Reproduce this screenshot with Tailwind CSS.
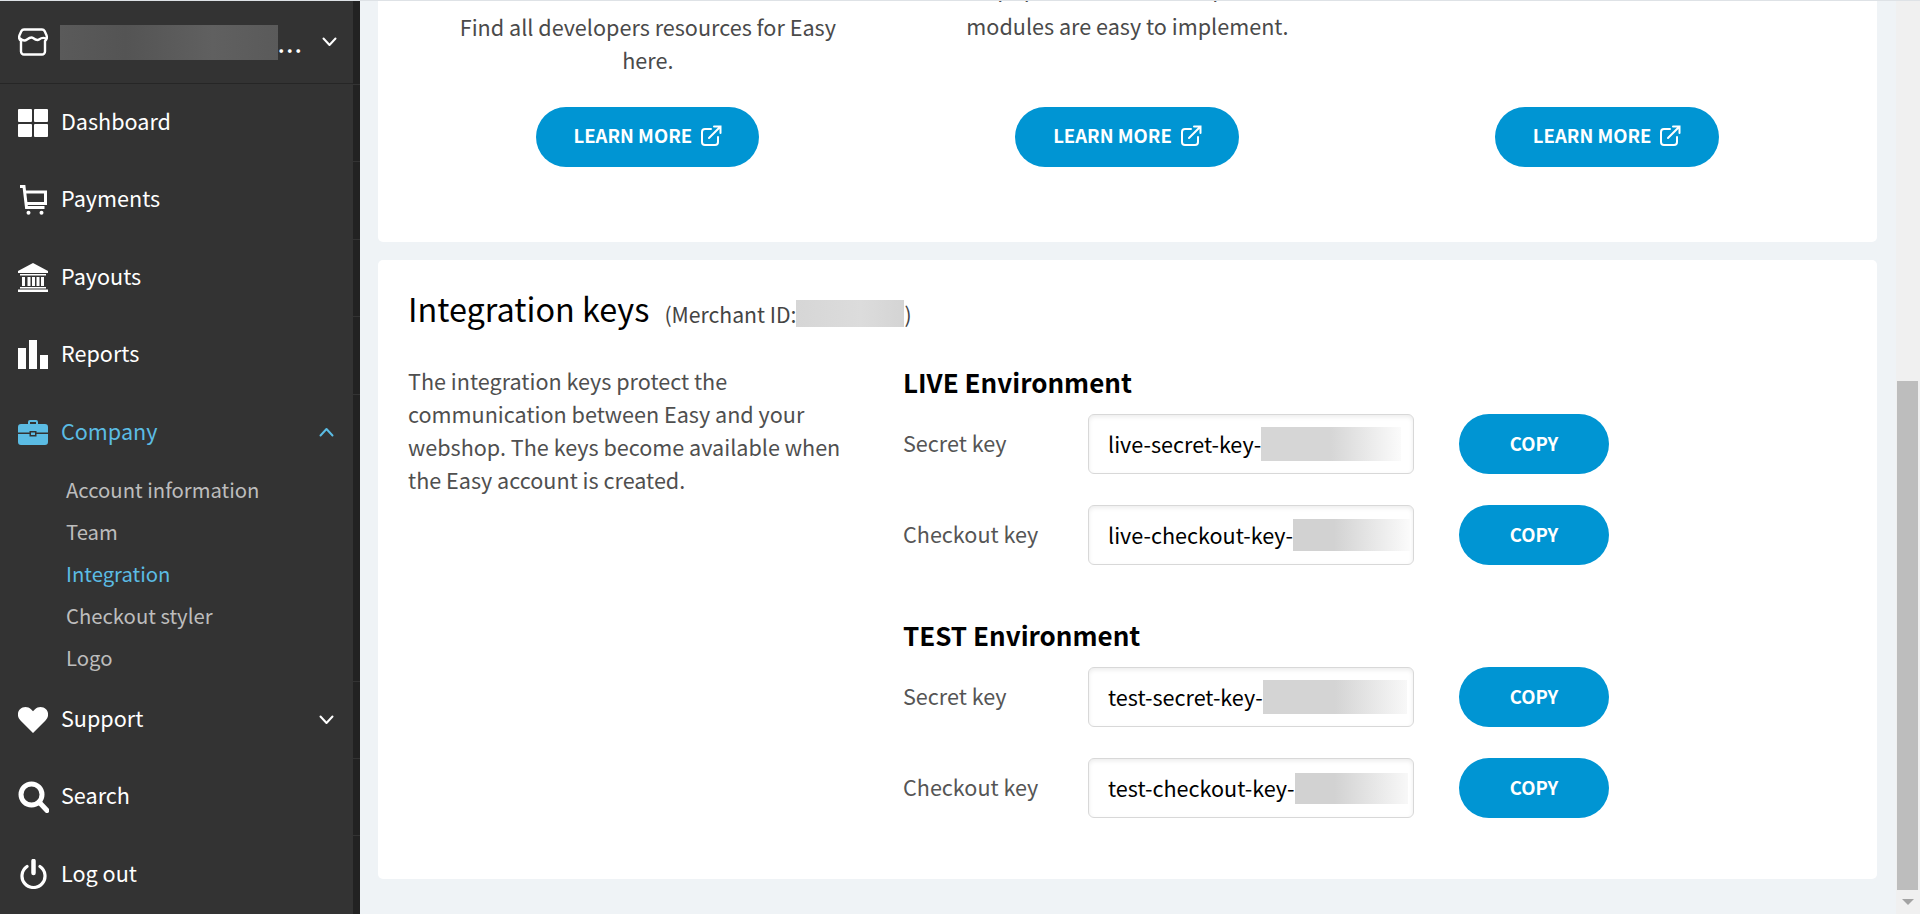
<!DOCTYPE html>
<html lang="en">
<head>
<meta charset="utf-8">
<script src="https://cdn.jsdelivr.net/npm/@tailwindcss/browser@4"></script>
<title>Integration</title>
</head>
<body class="m-0 h-[914px] w-[1920px] overflow-hidden bg-[#eff3f6] font-['Noto_Sans_CJK_SC','Noto_Sans',sans-serif] text-[21.6px]">
<div class="h-px bg-[#dee2e6]"></div>
<div class="flex h-[913px]">
  <!-- sidebar -->
  <aside class="flex w-[353px] flex-col bg-[#333333] text-white">
    <div class="flex h-[83px] items-center border-b border-[#262626] pl-[18px] pr-[16px]">
      <svg class="h-[28px] w-[30px] shrink-0" viewBox="0 0 30 28" fill="none" stroke="white" stroke-width="2.4" stroke-linejoin="round"><path d="M6 1.500h18a3 3 0 0 1 2.600 1.600l2 4.500c.8 2.200 0 4-1.600 5.400v10.500a3 3 0 0 1-3 3H6a3 3 0 0 1-3-3V13C1.400 11.600.6 9.800 1.400 7.600l2-4.500A3 3 0 0 1 6 1.500z"/><path d="M2 10.500c3 2.500 5 2.500 7 1s4-3 6-1.500 4 3 6 1.500 4-2.500 7-1" stroke-linecap="round"/></svg>
      <div class="ml-[12px] h-[35px] w-[218px] bg-[linear-gradient(90deg,#5a5a5a,#545454_30%,#606060_70%,#5a5a5a)]"></div>
      <span class="mt-[6px] w-[22px] text-[20px] font-bold leading-none tracking-[2px]">...</span>
      <svg class="ml-auto h-[10px] w-[15px]" viewBox="0 0 15 10" fill="none" stroke="white" stroke-width="2" stroke-linecap="round" stroke-linejoin="round"><path d="M1.500 1.500 7.500 8l6-6.500"/></svg>
    </div>
    <nav class="flex flex-col">
      <a class="flex h-[77.4px] items-center pl-[18px]">
        <svg class="h-[28px] w-[30px] shrink-0" viewBox="0 0 30 28" fill="white"><rect width="14" height="13" rx="1"/><rect x="16" width="14" height="13" rx="1"/><rect y="15" width="14" height="13" rx="1"/><rect x="16" y="15" width="14" height="13" rx="1"/></svg>
        <span class="-mt-[3px] ml-[13px]">Dashboard</span>
      </a>
      <a class="flex h-[77.4px] items-center pl-[18px]">
        <svg class="h-[30px] w-[30px] shrink-0" viewBox="0 0 30 30" fill="none" stroke="white" stroke-width="3"><path d="M2 1.500h4l2.500 21h18"/><path d="M7 7h20.500v11.500H8.500"/><circle cx="10.500" cy="27.800" r="2" fill="white" stroke="none"/><circle cx="23.500" cy="27.800" r="2" fill="white" stroke="none"/></svg>
        <span class="-mt-[3px] ml-[13px]">Payments</span>
      </a>
      <a class="flex h-[77.4px] items-center pl-[18px]">
        <svg class="h-[29px] w-[30px] shrink-0" viewBox="0 0 30 29" fill="white"><path d="M15 0 30 8v2H0V8z"/><path d="M2 11h26v1.500H2zM4 14h3v9H4zM9.500 14h3v9h-3zM14 14h3v9h-3zM18.500 14h3v9h-3zM23 14h3v9h-3zM2 24h26v1.500H2zM0 26.500h30V29H0z"/></svg>
        <span class="-mt-[3px] ml-[13px]">Payouts</span>
      </a>
      <a class="flex h-[77.4px] items-center pl-[18px]">
        <svg class="h-[29px] w-[30px] shrink-0" viewBox="0 0 30 29" fill="white"><rect y="8" width="8" height="21"/><rect x="11" width="8" height="29"/><rect x="22" y="15" width="8" height="14"/></svg>
        <span class="-mt-[3px] ml-[13px]">Reports</span>
      </a>
      <a class="flex h-[77.4px] items-center pl-[18px] pr-[19px] text-[#5bbce4]">
        <svg class="h-[25px] w-[30px] shrink-0" viewBox="0 0 30 25" fill="#5bbce4"><path d="M10 4V2a2 2 0 0 1 2-2h6a2 2 0 0 1 2 2v2h7a3 3 0 0 1 3 3v5.500H18.500V11h-7v1.500H0V7a3 3 0 0 1 3-3zm2 0h6V2h-6z"/><path d="M0 14h11.500v2.500h7V14H30v8a3 3 0 0 1-3 3H3a3 3 0 0 1-3-3z"/><rect x="13" y="12.500" width="4" height="2.500"/></svg>
        <span class="-mt-[3px] ml-[13px]">Company</span>
        <svg class="ml-auto h-[10px] w-[15px]" viewBox="0 0 15 10" fill="none" stroke="#5bbce4" stroke-width="2" stroke-linecap="round" stroke-linejoin="round"><path d="M1.500 8.500 7.500 2l6 6.500"/></svg>
      </a>
      <div class="flex flex-col pl-[66px] text-[20.3px] leading-[37px] text-[#bdbdbd]">
        <a class="h-[42px]">Account information</a>
        <a class="h-[42px]">Team</a>
        <a class="h-[42px] text-[#5bbce4]">Integration</a>
        <a class="h-[42px]">Checkout styler</a>
        <a class="h-[42px]">Logo</a>
      </div>
      <a class="flex h-[77.4px] items-center pl-[18px] pr-[19px]">
        <svg class="h-[26px] w-[30px] shrink-0" viewBox="0 0 30 26" fill="white"><path d="M15 26 2.500 13.500C-1 10-.8 5 2 2.300 5-.7 10-.7 13 2.300l2 2 2-2c3-3 8-3 11 0 2.800 2.700 3 7.700-.5 11.200z"/></svg>
        <span class="-mt-[3px] ml-[13px]">Support</span>
        <svg class="ml-auto h-[10px] w-[15px]" viewBox="0 0 15 10" fill="none" stroke="white" stroke-width="2" stroke-linecap="round" stroke-linejoin="round"><path d="M1.500 1.500 7.500 8l6-6.500"/></svg>
      </a>
      <a class="flex h-[77.4px] items-center pl-[18px]">
        <svg class="h-[32px] w-[31px] shrink-0" viewBox="0 0 31 32" fill="none" stroke="white"><circle cx="13.500" cy="13.500" r="10.500" stroke-width="5"/><path d="m21 21 8 8.500" stroke-width="5" stroke-linecap="round"/></svg>
        <span class="-mt-[3px] ml-[12px]">Search</span>
      </a>
      <a class="flex h-[77.4px] items-center pl-[20px]">
        <svg class="h-[30px] w-[27px] shrink-0" viewBox="0 0 27 30" fill="none" stroke="white" stroke-linecap="round"><path d="M7 7.500a11.500 11.500 0 1 0 13 0" stroke-width="3.200"/><path d="M13.500 2v12" stroke-width="4.500"/></svg>
        <span class="-mt-[3px] ml-[14px]">Log out</span>
      </a>
    </nav>
  </aside>
  <!-- dark strip -->
  <div class="flex w-[7px] flex-col bg-[#222222]">
    <div class="h-[84px] shrink-0 border-b border-[#333333]"></div>
    <div class="h-[77.4px] shrink-0 border-b border-[#333333]"></div>
    <div class="h-[77.4px] shrink-0 border-b border-[#333333]"></div>
    <div class="h-[77.4px] shrink-0 border-b border-[#333333]"></div>
    <div class="h-[77.4px] shrink-0 border-b border-[#333333]"></div>
    <div class="h-[287px] shrink-0 border-b border-[#333333]"></div>
    <div class="h-[77.4px] shrink-0 border-b border-[#333333]"></div>
    <div class="h-[77.4px] shrink-0 border-b border-[#333333]"></div>
  </div>
  <!-- main -->
  <main class="flex-1 overflow-hidden pl-[18px] pr-[19px]">
    <section class="-mt-[59px] grid h-[300px] grid-cols-3 items-end rounded-[5px] bg-white px-[30px] pb-[75px] text-center leading-[33px] text-[#4a4a4a]">
      <div class="flex flex-col items-center">
        <p class="mb-[31px] w-[400px]">Find all developers resources for Easy here.</p>
        <a class="flex h-[60px] w-[223px] items-center justify-center gap-[9px] rounded-full bg-[#0095d3] pb-[3px] text-[18.5px] font-semibold text-white">LEARN MORE
          <svg class="h-[21px] w-[21px]" viewBox="0 0 21 21" fill="none" stroke="white" stroke-width="2" stroke-linecap="round"><path d="M17 12v5a3 3 0 0 1-3 3H4a3 3 0 0 1-3-3V7a3 3 0 0 1 3-3h6"/><path d="M8 13 19 2M13 1.500h6.500V8"/></svg>
        </a>
      </div>
      <div class="flex flex-col items-center">
        <p class="mb-[65px] w-[420px]"><span class="mb-[5px] block">Our popular e-commerce platform</span>modules are easy to implement.</p>
        <a class="flex h-[60px] w-[224px] items-center justify-center gap-[9px] rounded-full bg-[#0095d3] pb-[3px] text-[18.5px] font-semibold text-white">LEARN MORE
          <svg class="h-[21px] w-[21px]" viewBox="0 0 21 21" fill="none" stroke="white" stroke-width="2" stroke-linecap="round"><path d="M17 12v5a3 3 0 0 1-3 3H4a3 3 0 0 1-3-3V7a3 3 0 0 1 3-3h6"/><path d="M8 13 19 2M13 1.500h6.500V8"/></svg>
        </a>
      </div>
      <div class="flex flex-col items-center">
        <a class="flex h-[60px] w-[224px] items-center justify-center gap-[9px] rounded-full bg-[#0095d3] pb-[3px] text-[18.5px] font-semibold text-white">LEARN MORE
          <svg class="h-[21px] w-[21px]" viewBox="0 0 21 21" fill="none" stroke="white" stroke-width="2" stroke-linecap="round"><path d="M17 12v5a3 3 0 0 1-3 3H4a3 3 0 0 1-3-3V7a3 3 0 0 1 3-3h6"/><path d="M8 13 19 2M13 1.500h6.500V8"/></svg>
        </a>
      </div>
    </section>
    <section class="mt-[18px] h-[619px] rounded-[5px] bg-white pl-[30px] pt-[27px]">
      <div class="flex h-[42px] items-center">
        <h2 class="text-[32.4px] font-normal leading-[42px] text-black">Integration keys</h2>
        <span class="ml-[15px] mt-[11px] text-[21.2px] text-[#444444]">(Merchant ID:</span>
        <span class="mt-[11px] h-[27px] w-[108px] bg-[linear-gradient(90deg,#d6d6d6,#dcdcdc_60%,#d4d4d4)]"></span>
        <span class="mt-[11px] text-[21.2px] text-[#444444]">)</span>
      </div>
      <div class="mt-[35px] flex">
        <p class="w-[495px] shrink-0 leading-[33px] text-[#4f4f4f]">The integration keys protect the<br>communication between Easy and your<br>webshop. The keys become available when<br>the Easy account is created.</p>
        <div class="flex w-[730px] flex-col">
          <h3 class="h-[38px] text-[26px] font-semibold leading-[36px] text-black">LIVE Environment</h3>
          <div class="mt-[12px] flex h-[60px] items-center">
            <span class="-mt-[1px] w-[185px] text-[#555555]">Secret key</span>
            <div class="flex h-[60px] w-[326px] items-center whitespace-nowrap rounded-[6px] border border-[#d8d8d8] pl-[19px] text-black shadow-[inset_0_2px_4px_rgba(0,0,0,0.08)]">live-secret-key-<span class="h-[34px] w-[140px] shrink-0 bg-[linear-gradient(90deg,#d6d6d6_50%,#fbfbfb)]"></span></div>
            <a class="ml-[45px] flex h-[60px] w-[150px] items-center justify-center rounded-full bg-[#0095d3] text-[18.5px] font-semibold text-white">COPY</a>
          </div>
          <div class="mt-[31px] flex h-[60px] items-center">
            <span class="-mt-[1px] w-[185px] text-[#555555]">Checkout key</span>
            <div class="flex h-[60px] w-[326px] items-center whitespace-nowrap rounded-[6px] border border-[#d8d8d8] pl-[19px] text-black shadow-[inset_0_2px_4px_rgba(0,0,0,0.08)]">live-checkout-key-<span class="h-[32px] w-[117px] shrink-0 bg-[linear-gradient(90deg,#d2d2d2_35%,#fbfbfb)]"></span></div>
            <a class="ml-[45px] flex h-[60px] w-[150px] items-center justify-center rounded-full bg-[#0095d3] text-[18.5px] font-semibold text-white">COPY</a>
          </div>
          <h3 class="mt-[52px] h-[38px] text-[26px] font-semibold leading-[36px] text-black">TEST Environment</h3>
          <div class="mt-[12px] flex h-[60px] items-center">
            <span class="-mt-[1px] w-[185px] text-[#555555]">Secret key</span>
            <div class="flex h-[60px] w-[326px] items-center whitespace-nowrap rounded-[6px] border border-[#d8d8d8] pl-[19px] text-black shadow-[inset_0_2px_4px_rgba(0,0,0,0.08)]">test-secret-key-<span class="h-[34px] w-[144px] shrink-0 bg-[linear-gradient(90deg,#d4d4d4_50%,#f8f8f8)]"></span></div>
            <a class="ml-[45px] flex h-[60px] w-[150px] items-center justify-center rounded-full bg-[#0095d3] text-[18.5px] font-semibold text-white">COPY</a>
          </div>
          <div class="mt-[31px] flex h-[60px] items-center">
            <span class="-mt-[1px] w-[185px] text-[#555555]">Checkout key</span>
            <div class="flex h-[60px] w-[326px] items-center whitespace-nowrap rounded-[6px] border border-[#d8d8d8] pl-[19px] text-black shadow-[inset_0_2px_4px_rgba(0,0,0,0.08)]">test-checkout-key-<span class="h-[31px] w-[113px] shrink-0 bg-[linear-gradient(90deg,#d2d2d2_35%,#f8f8f8)]"></span></div>
            <a class="ml-[45px] flex h-[60px] w-[150px] items-center justify-center rounded-full bg-[#0095d3] text-[18.5px] font-semibold text-white">COPY</a>
          </div>
        </div>
      </div>
    </section>
  </main>
  <!-- scrollbar -->
  <div class="flex w-[24px] flex-col bg-[#f0f0f0]">
    <div class="mt-[380px] ml-px h-[509px] w-[21px] bg-[#bdbdbd]"></div>
    <div class="mt-[9px] flex justify-center"><div class="h-0 w-0 border-x-[6px] border-t-[6px] border-x-transparent border-t-[#a3a3a3]"></div></div>
  </div>
</div>
</body>
</html>
